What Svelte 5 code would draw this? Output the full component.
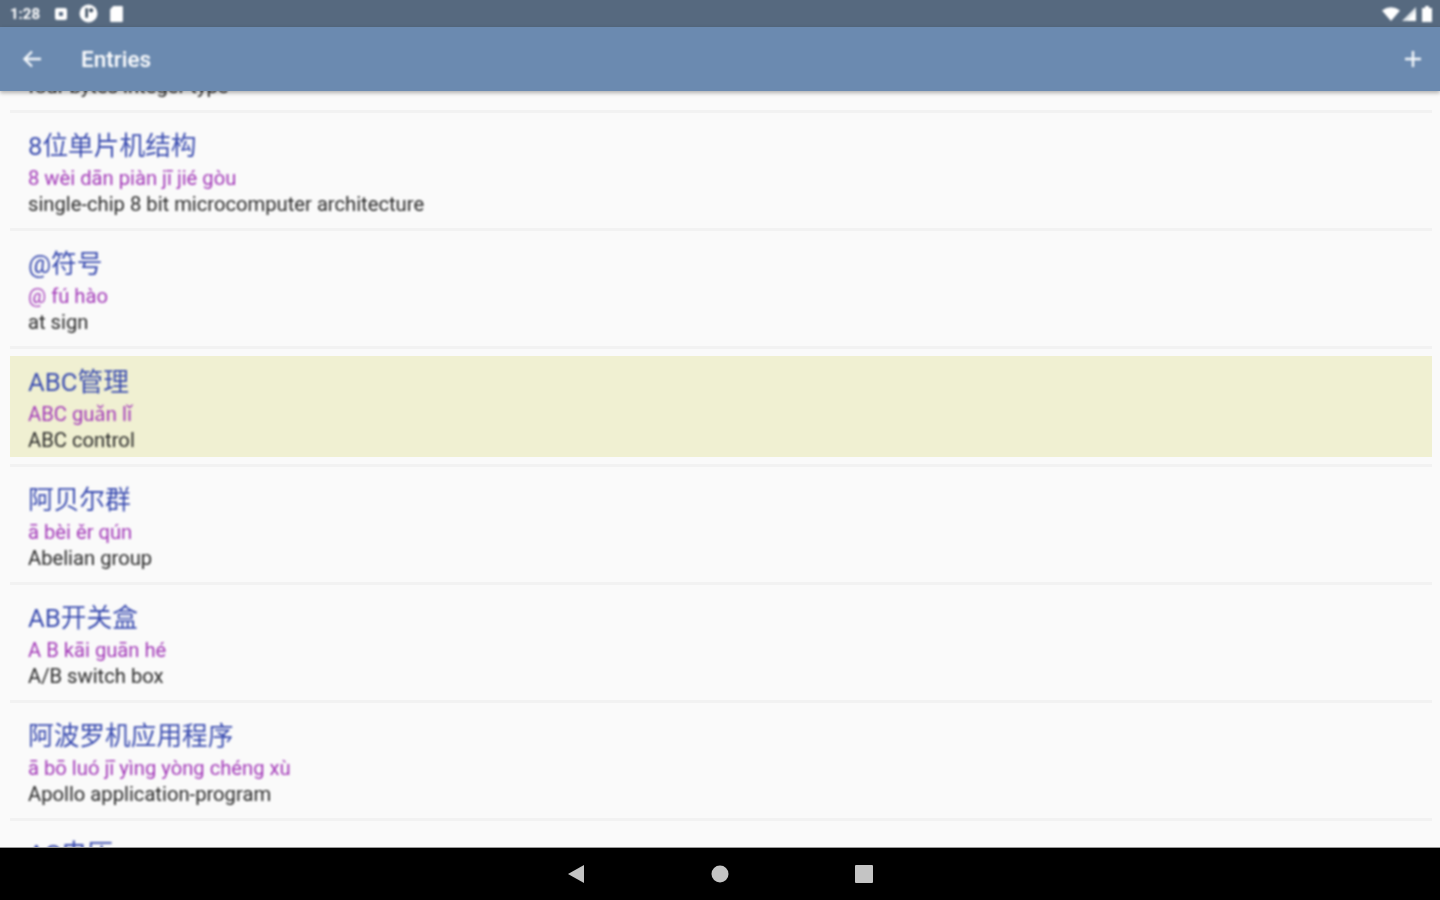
<script>
  const entries = [
    { title: '4字节整数类型', pinyin: '4 zì jié zhěng shù lèi xíng', gloss: 'four bytes integer type' },
    { title: '8位单片机结构', pinyin: '8 wèi dān piàn jī jié gòu', gloss: 'single-chip 8 bit microcomputer architecture' },
    { title: '@符号', pinyin: '@ fú hào', gloss: 'at sign' },
    { title: 'ABC管理', pinyin: 'ABC guǎn lǐ', gloss: 'ABC control', active: true },
    { title: '阿贝尔群', pinyin: 'ā bèi ěr qún', gloss: 'Abelian group' },
    { title: 'AB开关盒', pinyin: 'A B kāi guān hé', gloss: 'A/B switch box' },
    { title: '阿波罗机应用程序', pinyin: 'ā bō luó jī yìng yòng chéng xù', gloss: 'Apollo application-program' },
    { title: 'AC电压', pinyin: 'A C diàn yā', gloss: 'AC voltage' }
  ];
</script>

<div class="screen">
  <div class="status">
    <span class="time">1:28</span>
    <svg class="st" width="14" height="14" viewBox="0 0 14 14"><rect x="1" y="1" width="12" height="12" rx="2" fill="#fff"/><rect x="5" y="5" width="4" height="4" fill="#5a6e86"/></svg>
    <svg class="st" width="19" height="19" viewBox="0 0 18 18"><circle cx="9" cy="9" r="8.5" fill="#fff"/><rect x="6" y="4" width="2.5" height="9" fill="#3c4d60"/><circle cx="11.5" cy="6" r="2" fill="#3c4d60"/></svg>
    <svg class="st" width="15" height="17" viewBox="0 0 14 16"><path d="M4 1h8a1 1 0 0 1 1 1v13a1 1 0 0 1-1 1H2a1 1 0 0 1-1-1V4z" fill="#fff"/></svg>
    <span class="spacer"></span>
    <div class="signal">
      <svg width="18" height="14" viewBox="0 0 18 14"><path d="M0 3.5Q9-3 18 3.5L9 14z" fill="#fff"/></svg>
      <svg width="14" height="14" viewBox="0 0 14 14"><path d="M14 0v14H0z" fill="#dfe5ea"/><path d="M14 4v10H5z" fill="#fff"/></svg>
    </div>
    <svg width="10" height="16" viewBox="0 0 10 16"><path d="M3 0h4v2h3v14H0V2h3z" fill="#fff"/></svg>
  </div>

  <header class="bar">
    <svg class="back" width="22" height="22" viewBox="0 0 22 22"><path d="M20 11H4M11 3.5 3.5 11l7.5 7.5" fill="none" stroke="#f4f8fb" stroke-width="2.4"/></svg>
    <span class="heading">Entries</span>
    <span class="spacer"></span>
    <svg class="add" width="18" height="18" viewBox="0 0 18 18"><path d="M9 1v16M1 9h16" stroke="#f4f8fb" stroke-width="2.4"/></svg>
  </header>

  <main class="list">
    <div class="rows">
      {#each entries as e}
        <div class="row">
          <div class="item" class:active={e.active}>
            <div class="title">{e.title}</div>
            <div class="pinyin">{e.pinyin}</div>
            <div class="gloss">{e.gloss}</div>
          </div>
        </div>
      {/each}
    </div>
  </main>

  <nav class="nav">
    <svg width="18" height="18" viewBox="0 0 18 18"><path d="M17 0v18L1 9z" fill="#c4c4c4"/></svg>
    <svg width="18" height="18" viewBox="0 0 18 18"><circle cx="9" cy="9" r="8.5" fill="#c4c4c4"/></svg>
    <svg width="18" height="18" viewBox="0 0 18 18"><rect width="18" height="18" rx="1" fill="#c4c4c4"/></svg>
  </nav>
</div>

<style>
  :global(body) {
    margin: 0;
    background: #fafafa;
  }
  .screen {
    width: 1440px;
    height: 900px;
    display: flex;
    flex-direction: column;
    overflow: hidden;
    font-family: Roboto, "Noto Sans CJK SC", sans-serif;
  }
  .status {
    height: 27px;
    flex: none;
    display: flex;
    align-items: center;
    gap: 6px;
    padding: 0 8px 0 10px;
    box-sizing: border-box;
    background: #56697f;
    color: #fff;
  }
  .status > * {
    filter: blur(0.8px);
  }
  .signal {
    display: flex;
    align-items: center;
    gap: 2px;
  }
  .time {
    font-size: 15px;
    font-weight: 700;
    margin-right: 8px;
  }
  .st {
    margin-right: 5px;
  }
  .spacer {
    flex: 1;
  }
  .bar {
    height: 64px;
    flex: none;
    display: flex;
    align-items: center;
    padding: 0 18px 0 21px;
    background: #6b8ab0;
    box-shadow: 0 2px 4px rgba(0, 0, 0, 0.3);
    position: relative;
    z-index: 1;
  }
  .heading {
    margin-left: 38px;
    font-size: 22.5px;
    font-weight: 500;
    color: #fff;
    filter: blur(0.8px);
  }
  .back, .add {
    filter: blur(0.8px);
  }
  .list {
    flex: 1;
    min-height: 0;
    overflow: hidden;
    background: #fafafa;
  }
  .rows {
    margin-top: -96px;
  }
  .row {
    height: 118px;
    box-sizing: border-box;
    margin: 0 8px 0 10px;
    padding-top: 7px;
    border-bottom: 3px solid #f2f2f2;
  }
  .item {
    height: 101px;
    padding: 9px 18px 0;
    box-sizing: border-box;
  }
  .item.active {
    background: #f0f0d2;
  }
  .title, .pinyin, .gloss {
    filter: blur(0.8px);
  }
  .title {
    font-size: 25.7px;
    line-height: 34px;
    color: #3a4cb0;
  }
  .pinyin {
    font-size: 20.2px;
    line-height: 26px;
    margin-top: 2px;
    color: #a238b8;
  }
  .gloss {
    font-size: 20.2px;
    line-height: 26px;
    color: #2a2a2a;
  }
  .nav {
    height: 53px;
    flex: none;
    display: flex;
    justify-content: center;
    align-items: center;
    gap: 126px;
    background: #000;
    border-top: 1px solid #999;
    box-sizing: border-box;
    position: relative;
    z-index: 1;
  }
</style>
